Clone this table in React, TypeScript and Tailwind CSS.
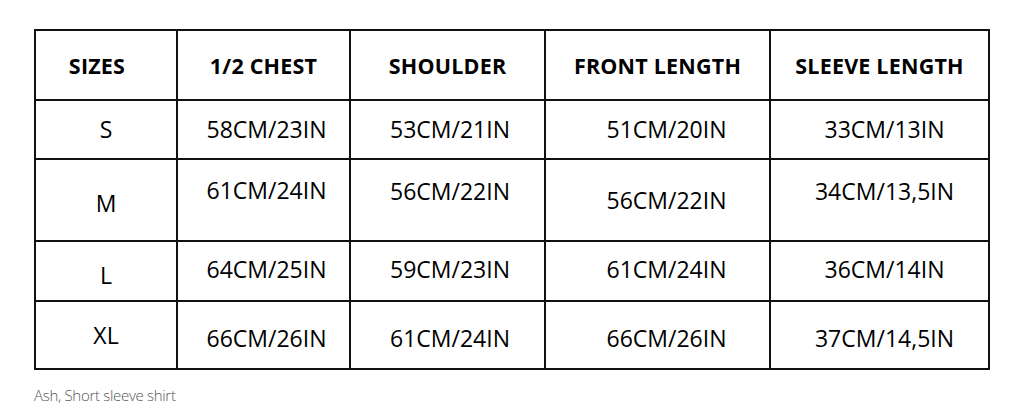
import React from 'react';

type Cell = { text: string; shift?: string };

const headers = ['SIZES', '1/2 CHEST', 'SHOULDER', 'FRONT LENGTH', 'SLEEVE LENGTH'];

const rows: { height: string; cells: Cell[] }[] = [
  {
    height: 'h-[59px]',
    cells: [
      { text: 'S' },
      { text: '58CM/23IN', shift: 'pl-[6px]' },
      { text: '53CM/21IN', shift: 'pl-[5px]' },
      { text: '51CM/20IN', shift: 'pl-[18px]' },
      { text: '33CM/13IN', shift: 'pl-[10px]' }
    ]
  },
  {
    height: 'h-[82px]',
    cells: [
      { text: 'M', shift: 'pt-[6px]' },
      { text: '61CM/24IN', shift: 'pb-[20px] pl-[6px]' },
      { text: '56CM/22IN', shift: 'pb-[18px] pl-[5px]' },
      { text: '56CM/22IN', shift: 'pl-[18px]' },
      { text: '34CM/13,5IN', shift: 'pb-[18px] pl-[10px]' }
    ]
  },
  {
    height: 'h-[60px]',
    cells: [
      { text: 'L', shift: 'pt-[8px]' },
      { text: '64CM/25IN', shift: 'pb-[4px] pl-[6px]' },
      { text: '59CM/23IN', shift: 'pb-[4px] pl-[5px]' },
      { text: '61CM/24IN', shift: 'pb-[4px] pl-[18px]' },
      { text: '36CM/14IN', shift: 'pb-[4px] pl-[10px]' }
    ]
  },
  {
    height: 'h-[68px]',
    cells: [
      { text: 'XL' },
      { text: '66CM/26IN', shift: 'pt-[6px] pl-[6px]' },
      { text: '61CM/24IN', shift: 'pt-[6px] pl-[5px]' },
      { text: '66CM/26IN', shift: 'pt-[6px] pl-[18px]' },
      { text: '37CM/14,5IN', shift: 'pt-[6px] pl-[10px]' }
    ]
  }
];

const colWidths = ['w-[142px]', 'w-[173px]', 'w-[195px]', 'w-[225px]', 'w-[219px]'];

const App: React.FC = () => {
  return (
    <div className="w-[1024px] h-[417px] bg-white font-['Open_Sans',sans-serif] text-black">
      <div className="pt-[29px] pl-[34px]">
        {/* Size table */}
        <div className="w-[956px] border-l-2 border-t-2 border-[#111]">
          <div className="flex h-[70px]">
            {headers.map((h, i) => (
              <div
                key={h}
                className={`${colWidths[i]} flex items-center justify-center border-r-2 border-b-2 border-[#111] text-[21.5px] font-bold tracking-[0.2px] pt-[2px] ${i === 0 ? 'pr-[18px]' : ''}`}
              >
                {h}
              </div>
            ))}
          </div>
          {rows.map((row, r) => (
            <div key={r} className={`flex ${row.height}`}>
              {row.cells.map((c, i) => (
                <div
                  key={i}
                  className={`${colWidths[i]} flex items-center justify-center border-r-2 border-b-2 border-[#111] text-[23px] leading-none ${c.shift ?? ''}`}
                >
                  {c.text}
                </div>
              ))}
            </div>
          ))}
        </div>
        {/* Caption */}
        <p className="mt-[14px] text-[15px] font-light tracking-[-0.3px] text-[#555]">Ash, Short sleeve shirt</p>
      </div>
    </div>
  );
};

export default App;
